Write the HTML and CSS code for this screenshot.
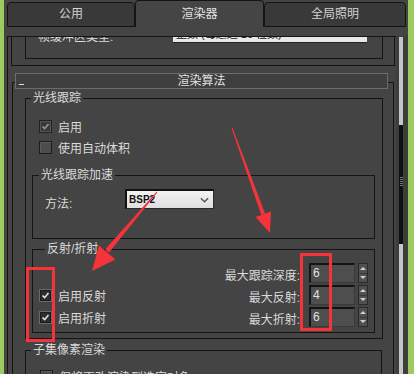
FILE: index.html
```html
<!DOCTYPE html>
<html lang="zh-CN">
<head>
    <meta charset="UTF-8">
    <meta name="viewport" content="width=device-width, initial-scale=1.0">
    <title>渲染设置 - 渲染器</title>
    <link rel="stylesheet" href="styles.css">
</head>
<body>
    <div class="window">
        <!-- Tab strip -->
        <div class="tabs">
            <div class="tab">公用</div>
            <div class="tab active">渲染器</div>
            <div class="tab">全局照明</div>
        </div>

        <div class="main">
            <div class="viewport">
                <!-- bottom of the previous rollout, scrolled out of view -->
                <div class="rollout-tail">
                    <div class="group tail-group">
                        <div class="tail-row">
                            <span class="tail-label">帧缓冲区类型:</span>
                            <span class="field">整数 (每通道 16 位数)</span>
                        </div>
                    </div>
                </div>

                <!-- 渲染算法 -->
                <div class="rollout">
                    <div class="rollout-head">
                        <span class="minus"></span>
                        <span class="head-title">渲染算法</span>
                        <span></span>
                    </div>

                    <div class="group raytrace">
                        <div class="group-title">光线跟踪</div>
                        <div class="check-row">
                            <span class="box checked dim"><svg viewBox="0 0 13 13"><polyline points="3,6.5 5.5,9 10,3.5"/></svg></span>
                            <span>启用</span>
                        </div>
                        <div class="check-row">
                            <span class="box"></span>
                            <span>使用自动体积</span>
                        </div>

                        <div class="group inner accel">
                            <div class="group-title">光线跟踪加速</div>
                            <div class="method-row">
                                <span class="method-label">方法:</span>
                                <span class="combo">
                                    <span>BSP2</span>
                                    <svg viewBox="0 0 10 6"><polyline points="1,1 5,5 9,1"/></svg>
                                </span>
                            </div>
                        </div>

                        <div class="group inner reflect">
                            <div class="group-title">反射/折射</div>
                            <div class="reflect-grid">
                                <span></span>
                                <span class="spin-label">最大跟踪深度:</span>
                                <span class="num">6</span>
                                <span class="spinner"><i class="up"></i><i class="down"></i></span>

                                <span class="check-cell">
                                    <span class="box checked"><svg viewBox="0 0 13 13"><polyline points="3,6.5 5.5,9 10,3.5"/></svg></span>
                                    <span>启用反射</span>
                                </span>
                                <span class="spin-label">最大反射:</span>
                                <span class="num">4</span>
                                <span class="spinner"><i class="up"></i><i class="down"></i></span>

                                <span class="check-cell">
                                    <span class="box checked"><svg viewBox="0 0 13 13"><polyline points="3,6.5 5.5,9 10,3.5"/></svg></span>
                                    <span>启用折射</span>
                                </span>
                                <span class="spin-label">最大折射:</span>
                                <span class="num">6</span>
                                <span class="spinner"><i class="up"></i><i class="down"></i></span>
                            </div>
                        </div>
                    </div>

                    <div class="group subset">
                        <div class="group-title">子集像素渲染</div>
                        <div class="check-row">
                            <span class="box"></span>
                            <span>仅将更改渲染到选定对象</span>
                        </div>
                    </div>
                </div>
            </div>

            <div class="gutter">
                <div class="scrollbar">
                    <div class="track-top"></div>
                    <div class="thumb"><span class="grip"></span></div>
                    <div class="track-bottom"></div>
                </div>
            </div>
        </div>
    </div>

    <!-- red annotations drawn on top of the screenshot -->
    <svg class="marks" width="414" height="374" viewBox="0 0 414 374">
        <rect x="27.5" y="268.5" width="26" height="72"/>
        <rect x="301.5" y="254.5" width="29" height="75"/>
        <polygon points="232.5,127.8 231.5,128.2 261.3,214.9 265.1,213.5"/>
        <polygon points="270,233 255.5,217 271,211.5"/>
        <polygon points="157.3,192.4 156.7,191.6 105.3,249.3 109.1,252.5"/>
        <polygon points="92,271 99,245.5 115.5,259.5"/>
    </svg>
</body>
</html>
```

FILE: styles.css
```css
body {
    margin: 0;
    background: #9dcb5e;
    font: 12px "Liberation Sans", "Noto Sans CJK SC", sans-serif;
    color: #dadada;
    position: relative;
    height: 374px;
    overflow: hidden;
}
.window {
    margin: 0 6px 0 4px;
    height: 374px;
    background: #444;
    display: flex;
    flex-direction: column;
}

/* tabs */
.tabs {
    display: flex;
    align-items: flex-end;
    height: 27px;
    padding-left: 3px;
}
.tab {
    box-sizing: border-box;
    height: 25px;
    border: 1px solid #141414;
    border-radius: 4px 4px 0 0;
    background: #393939;
    color: #d2d2d2;
    font-size: 12px;
    line-height: 23px;
    text-align: center;
}
.tab:nth-child(1) { width: 128px; }
.tab:nth-child(2) { width: 129px; }
.tab:nth-child(3) { width: 142px; }
.tab.active {
    height: 27px;
    border-bottom: none;
    background: #454545;
    color: #e6e6e6;
    line-height: 26px;
}

.main {
    display: flex;
    flex: 1;
    margin-top: 9px;
    min-height: 0;
}
.viewport {
    width: 388px;
    margin-left: 3px;
    border-left: 1px solid #141414;
    border-top: 1px solid #141414;
    overflow: hidden;
}
.gutter {
    flex: 1;
    background: #3d3d3d;
    padding: 1px 0 0 3px;
    display: flex;
}
.scrollbar {
    width: 4px;
    display: flex;
    flex-direction: column;
}
.track-top { height: 88px; background: #c6c6c6; }
.thumb {
    height: 119px;
    background: #111;
    display: flex;
    align-items: center;
    justify-content: center;
}
.grip {
    width: 3px;
    height: 9px;
    margin-top: -6px;
    background: repeating-linear-gradient(#777 0 1px, transparent 1px 2px);
}
.track-bottom { flex: 1; background: #c6c6c6; }

/* group boxes */
.group {
    border: 1px solid #141414;
}
.group-title {
    display: table;
    margin: -8px 0 0 5px;
    padding: 0 2px;
    background: #444;
    line-height: 14px;
}

/* tail of the previous rollout */
.rollout-tail {
    margin: -10px 1px 0 3px;
    border: 1px solid #141414;
    border-top: none;
    padding-bottom: 6px;
}
.tail-group {
    border-top: none;
    margin: 0 11px 0 13px;
    padding: 0 15px 15px 12px;
}
.tail-row {
    display: flex;
    align-items: center;
    height: 16px;
}
.tail-label { flex: 1; }
.field {
    box-sizing: border-box;
    width: 194px;
    height: 16px;
    background: #e8e8e8;
    border-bottom: 1px solid #222;
    color: #111;
    font-size: 11px;
    line-height: 15px;
    padding-left: 3px;
}

/* rollout */
.rollout {
    margin: 16px 2px 0 4px;
    border: 1px solid #141414;
    border-bottom: none;
}
.rollout-head {
    box-sizing: border-box;
    height: 16px;
    margin: -10px 5px 0 2px;
    border: 1px solid #6c6c6c;
    background: #3f3f3f;
    display: grid;
    grid-template-columns: 1fr auto 1fr;
    line-height: 14px;
    color: #e2e2e2;
}
.minus {
    width: 5px;
    height: 1px;
    margin: 10px 0 0 3px;
    background: #e0e0e0;
}

.raytrace {
    margin: 9px 10px 0 12px;
    padding-bottom: 5px;
}
.check-row {
    display: flex;
    align-items: center;
    gap: 6px;
    height: 21px;
    padding-left: 13px;
    white-space: nowrap;
}
.raytrace > .group-title { margin-bottom: 11px; }
.box {
    box-sizing: border-box;
    width: 13px;
    height: 13px;
    border: 1px solid #1c1c1c;
    background: #4c4c4c;
    box-shadow: inset 1px 1px 0 #5c5c5c;
    display: flex;
}
.box svg {
    width: 11px;
    height: 11px;
}
.box polyline {
    fill: none;
    stroke: #e6e6e6;
    stroke-width: 1.8;
}
.box.checked {
    background: #2e2e2e;
    border-color: #6a6a6a;
    box-shadow: inset 0 0 0 1px #1a1a1a;
}
.box.dim {
    border-color: #222;
    background: #383838;
    box-shadow: inset 0 0 0 1px #555;
}
.box.dim polyline { stroke: #9a9a9a; }

.inner {
    margin: 0 7px 0 6px;
}
.accel {
    margin-top: 17px;
    padding-bottom: 29px;
}
.accel .group-title,
.reflect .group-title { margin-left: 6px; }
.method-row {
    display: flex;
    align-items: center;
    margin-top: 7px;
    padding-left: 12px;
    height: 20px;
}
.method-label {
    width: 80px;
    padding-top: 6px;
}
.combo {
    box-sizing: border-box;
    width: 89px;
    height: 20px;
    border-top: 2px solid #111;
    border-left: 2px solid #111;
    border-right: 1px solid #2a2a2a;
    border-bottom: 1px solid #2a2a2a;
    background: linear-gradient(#f2f2f2, #dedede);
    color: #111;
    font-size: 10px;
    font-weight: bold;
    line-height: 17px;
    padding: 0 4px 0 2px;
    display: flex;
    justify-content: space-between;
    align-items: center;
}
.combo svg {
    width: 9px;
    height: 6px;
}
.combo polyline {
    fill: none;
    stroke: #555;
    stroke-width: 1.6;
}

.reflect {
    margin-top: 10px;
    padding: 0 6px 5px 6px;
}
.reflect-grid {
    display: grid;
    grid-template-columns: 1fr auto 46px 13px;
    grid-auto-rows: 20px;
    row-gap: 2px;
    margin-top: 7px;
    align-items: center;
}
.check-cell {
    display: flex;
    align-items: center;
    gap: 6px;
    white-space: nowrap;
}
.spin-label {
    text-align: right;
    white-space: nowrap;
    padding-right: 9px;
    padding-top: 2px;
}
.num {
    box-sizing: border-box;
    height: 20px;
    border-top: 2px solid #141414;
    border-left: 2px solid #141414;
    border-right: 1px solid #3a3a3a;
    border-bottom: 1px solid #3a3a3a;
    background: #4e4e4e;
    color: #e0e0e0;
    line-height: 17px;
    padding-left: 2px;
}
.spinner {
    box-sizing: border-box;
    height: 20px;
    margin-left: 3px;
    width: 10px;
    border: 1px solid #2a2a2a;
    background: #505050;
    display: flex;
    flex-direction: column;
}
.spinner i {
    flex: 1;
    display: flex;
    align-items: center;
    justify-content: center;
}
.spinner .up { border-bottom: 1px solid #3a3a3a; }
.spinner i::before {
    content: "";
    border-left: 3px solid transparent;
    border-right: 3px solid transparent;
}
.spinner .up::before { border-bottom: 3px solid #cfcfcf; }
.spinner .down::before { border-top: 3px solid #cfcfcf; }

.subset {
    margin: 11px 11px 0 12px;
    border-bottom: none;
}
.subset .group-title { margin-bottom: 9px; }
.subset .check-row { padding-left: 14px; }

/* annotations */
.marks {
    position: absolute;
    left: 0;
    top: 0;
}
.marks rect {
    fill: none;
    stroke: #f5333a;
    stroke-width: 3;
}
.marks polygon {
    fill: #f5333a;
}
```
